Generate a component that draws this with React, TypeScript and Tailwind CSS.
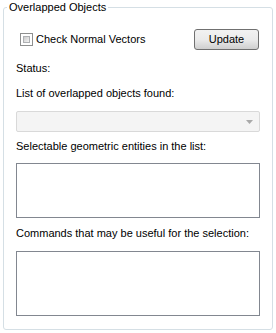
export default function App() {
  return (
    <div className="w-[276px] h-[333px] bg-white pt-[1px] px-[3px] text-[11px] leading-[13px] text-black font-['Liberation_Sans',Arial,sans-serif]">

      <fieldset className="h-[329px] border border-[#d5dfe5] rounded-[3px] px-[12px]">

        <legend className="-ml-[9px] px-[2px] text-black">
          Overlapped Objects
        </legend>

        {/* checkbox + update */}
        <div className="mt-[15px] flex items-center justify-between h-[21px] pl-[4px] pr-[1px]">
          <label className="flex items-center gap-[3px]">
            <span className="w-[13px] h-[13px] border border-[#8e8f8f] bg-white p-[2px] flex">
              <span className="flex-1 border border-[#aeb0b3] bg-gradient-to-br from-[#cbcbcb] to-[#f4f4f4]" />
            </span>
            <span>Check Normal Vectors</span>
          </label>

          <button
            className="
              w-[65px]
              h-[21px]
              rounded-[3px]
              border
              border-[#707070]
              bg-gradient-to-b
              from-[#f2f2f2]
              via-[#ebebeb]
              to-[#cfcfcf]
              text-black
            "
          >
            Update
          </button>
        </div>

        <div className="mt-[12px]">Status:</div>

        <div className="mt-[12px]">List of overlapped objects found:</div>

        {/* disabled combo */}
        <div className="mt-[11px] h-[21px] border border-[#d9d9d9] rounded-[2px] bg-[#f4f4f4] flex items-center justify-end pr-[6px]">
          <svg width="7" height="4" viewBox="0 0 7 4">
            <path d="M0 0h7L3.5 4z" fill="#a9a9a9" />
          </svg>
        </div>

        <div className="mt-[8px]">Selectable geometric entities in the list:</div>

        <div className="mt-[10px] h-[55px] border border-[#828790] bg-white" />

        <div className="mt-[9px]">Commands that may be useful for the selection:</div>

        <div className="mt-[11px] h-[65px] border border-[#828790] bg-white" />

      </fieldset>

    </div>
  );
}
